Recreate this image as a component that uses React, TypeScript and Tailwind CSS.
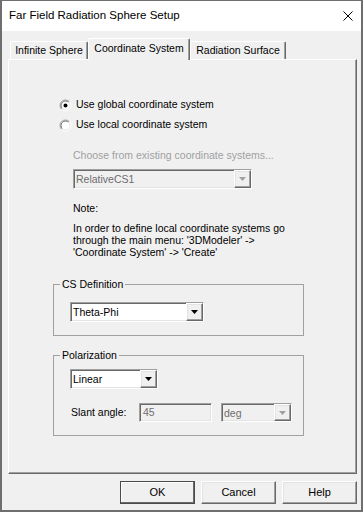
// Far Field Radiation Sphere Setup ダイアログ(Coordinate System タブ)
// Windows クラシック風の 3D 枠はボーダー + inset shadow で表現する。

import type { ReactNode } from "react";

const sunken =
  "border border-t-[#a0a0a0] border-l-[#a0a0a0] border-r-white border-b-white shadow-[inset_1px_1px_0_#696969,inset_-1px_-1px_0_#e3e3e3]";
const raised =
  "border border-t-white border-l-white border-r-[#696969] border-b-[#696969] shadow-[inset_-1px_-1px_0_#a0a0a0,inset_1px_1px_0_#e3e3e3]";

function Radio({ checked }: { checked?: boolean }) {
  return (
    <svg width="13" height="13" viewBox="0 0 13 13" className="shrink-0">
      <circle cx="6.5" cy="6.5" r="5.5" fill="#fff" />
      <path d="M2.6 10.4 A5.5 5.5 0 0 1 10.4 2.6" stroke="#a0a0a0" fill="none" />
      <path d="M10.4 2.6 A5.5 5.5 0 0 1 2.6 10.4" stroke="#fff" fill="none" />
      <path d="M3.3 9.7 A4.5 4.5 0 0 1 9.7 3.3" stroke="#696969" fill="none" />
      <path d="M9.7 3.3 A4.5 4.5 0 0 1 3.3 9.7" stroke="#e3e3e3" fill="none" />
      {checked && <circle cx="6.5" cy="6.5" r="2" fill="#000" />}
    </svg>
  );
}

function Arrow({ disabled }: { disabled?: boolean }) {
  return (
    <div className={`w-[17px] h-full flex items-center justify-center bg-[#f0f0f0] ${raised}`}>
      <svg width="7" height="4" viewBox="0 0 7 4">
        <path d="M0 0 H7 L3.5 4 Z" fill={disabled ? "#a0a0a0" : "#000"} />
      </svg>
    </div>
  );
}

function Combo({
  value,
  width,
  disabled,
  className = "",
}: {
  value: string;
  width: string;
  disabled?: boolean;
  className?: string;
}) {
  return (
    <div
      className={`${width} h-[20px] flex ${sunken} ${
        disabled ? "bg-[#f0f0f0] text-[#6d6d6d]" : "bg-white text-black"
      } ${className}`}
    >
      <span className="flex-1 pl-[2px] leading-[16px] self-center">{value}</span>
      <Arrow disabled={disabled} />
    </div>
  );
}

function Group({ label, children, className = "" }: { label: string; children: ReactNode; className?: string }) {
  return (
    <fieldset className={`ml-[44px] w-[251px] border border-[#a0a0a0] ${className}`}>
      <legend className="ml-[6px] px-[2px] leading-[13px]">{label}</legend>
      {children}
    </fieldset>
  );
}

function Tab({ label, width, active }: { label: string; width: string; active?: boolean }) {
  return (
    <div
      className={`${width} flex justify-center items-center rounded-t-[2px] border-l border-t border-r border-l-white border-t-white border-r-[#696969] shadow-[inset_-1px_0_0_#a0a0a0] bg-[#f0f0f0] ${
        active ? "h-[22px] -mb-[1px] relative z-10 pb-[2px]" : "h-[18px]"
      }`}
    >
      {label}
    </div>
  );
}

function Button({ label, primary }: { label: string; primary?: boolean }) {
  return (
    <div
      className={`w-[75px] h-[23px] flex items-center justify-center text-[11px] ${
        primary
          ? "border border-[#4a4a4a] shadow-[inset_-1px_-1px_0_#696969,inset_1px_1px_0_#fff]"
          : raised
      }`}
    >
      {label}
    </div>
  );
}

export default function App() {
  return (
    <div className="w-[363px] h-[512px] flex flex-col bg-[#f0f0f0] border-2 border-t border-[#6f6f6f] font-['Liberation_Sans',Arial,sans-serif] text-[10.5px] text-black">
      {/* タイトルバー */}
      <div className="h-[30px] shrink-0 bg-white flex items-center justify-between pl-[7px] pr-[8px]">
        <span className="text-[11.5px]">Far Field Radiation Sphere Setup</span>
        <svg width="10" height="10" viewBox="0 0 10 10">
          <path d="M0.5 0.5 L9.5 9.5 M9.5 0.5 L0.5 9.5" stroke="#000" strokeWidth="1" />
        </svg>
      </div>

      {/* タブ */}
      <div className="mt-[7px] h-[21px] flex items-end pl-[8px]">
        <Tab label="Infinite Sphere" width="w-[78px]" />
        <Tab label="Coordinate System" width="w-[102px]" active />
        <Tab label="Radiation Surface" width="w-[96px]" />
      </div>

      {/* タブ本体 */}
      <div className="ml-[6px] w-[349px] h-[415px] flex flex-col border border-t-white border-l-white border-r-[#696969] border-b-[#696969] shadow-[inset_-1px_-1px_0_#a0a0a0]">
        <div className="mt-[37px] h-[16px] flex items-center gap-[4px] pl-[50px]">
          <Radio checked />
          <span>Use global coordinate system</span>
        </div>
        <div className="mt-[4px] h-[16px] flex items-center gap-[4px] pl-[50px]">
          <Radio />
          <span>Use local coordinate system</span>
        </div>

        <div className="mt-[16px] ml-[64px] h-[13px] leading-[13px] text-[#a0a0a0]">
          Choose from existing coordinate systems...
        </div>
        <Combo value="RelativeCS1" width="w-[179px]" disabled className="mt-[7px] ml-[64px]" />

        <div className="mt-[13px] ml-[64px] h-[13px] leading-[13px]">Note:</div>
        <div className="mt-[7px] ml-[64px] leading-[12px] whitespace-nowrap">
          In order to define local coordinate systems go
          <br />
          through the main menu: '3DModeler' -&gt;
          <br />
          'Coordinate System' -&gt; 'Create'
        </div>

        <Group label="CS Definition" className="mt-[20px] pb-[13px]">
          <Combo value="Theta-Phi" width="w-[134px]" className="mt-[11px] ml-[16px]" />
        </Group>

        <Group label="Polarization" className="mt-[13px] pb-[13px]">
          <Combo value="Linear" width="w-[88px]" className="mt-[7px] ml-[16px]" />
          <div className="mt-[14px] h-[19px] flex items-center pl-[17px]">
            <span className="w-[68px]">Slant angle:</span>
            <div className={`w-[73px] h-[19px] flex items-center pl-[3px] text-[#6d6d6d] bg-[#f0f0f0] ${sunken}`}>
              45
            </div>
            <Combo value="deg" width="w-[71px]" disabled className="ml-[9px] !h-[19px]" />
          </div>
        </Group>
      </div>

      {/* ボタン */}
      <div className="mt-[7px] flex justify-end gap-[6px] pr-[4px]">
        <Button label="OK" primary />
        <Button label="Cancel" />
        <Button label="Help" />
      </div>
    </div>
  );
}
